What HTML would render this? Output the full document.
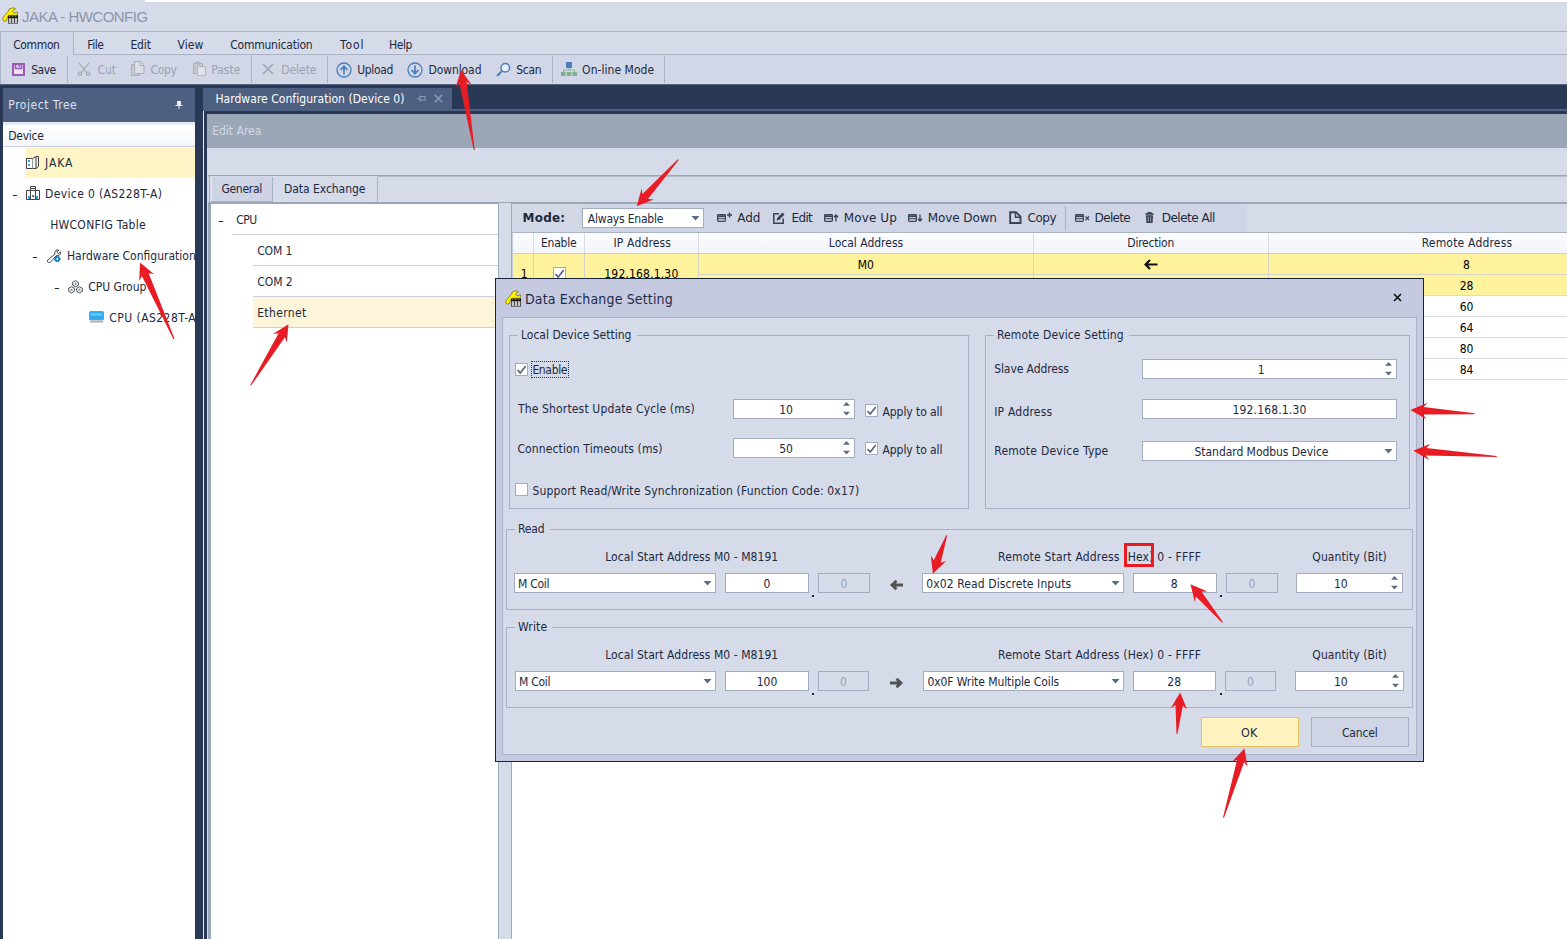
<!DOCTYPE html>
<html lang="en"><head><meta charset="utf-8"><title>JAKA - HWCONFIG</title>
<style>
*{box-sizing:border-box;margin:0;padding:0}
html,body{width:1567px;height:939px;overflow:hidden;background:#d6dbe9}
body{font-family:"DejaVu Sans Condensed","DejaVu Sans","Liberation Sans",sans-serif;font-stretch:condensed;font-size:12px;color:#1b293e;position:relative}
#app{position:absolute;left:0;top:0;width:1567px;height:939px;overflow:hidden;background:#d6dbe9}
#app div,#app span,#app svg{position:absolute}
.t{white-space:nowrap;line-height:16px;height:16px}
.c{width:200px;text-align:center}
.w{font-family:"DejaVu Sans","Liberation Sans",sans-serif;font-stretch:normal}
.dis{color:#9aa3b6}
.dash{transform:scaleX(1.45);transform-origin:0 0}
.in{background:#fff;border:1px solid #a3acc0}
.ind{background:#d7dcea;border:1px solid #a3acc0}
.gb{border:1px solid #a7b0c4}
.gl{background:#d6dbe9}
.hl{background:#c9cfdc}
</style></head>
<body><div id="app">
<div style="left:145px;top:0px;width:1422px;height:2px;background:#fff"></div>
<svg style="left:0px;top:6px" width="20" height="19" viewBox="0 0 20 19"><rect x="8" y="9.300" width="10" height="8.400" fill="#4f4f4f"/><rect x="8" y="9.300" width="10" height="2.600" fill="#111"/><path d="M9.800 10.300h.01M12.800 10.300h.01M15.800 10.300h.01" stroke="#d8cf2a" stroke-width="1.100" stroke-linecap="round"/><rect x="9" y="12.300" width="2" height="4.700" fill="#c6c6c6"/><rect x="12" y="12.300" width="2" height="4.700" fill="#c6c6c6"/><rect x="15" y="12.300" width="2" height="4.700" fill="#c6c6c6"/><path d="M2.700 13.500L3 11.500 8.500 5 9.500 2.800 12 2h2.500l1 1-2 1-.8 1.700L14 7l2-.8 1.500-.2v1.500l-1 1.800h-8l-1 1.700-1 3.500-2.500.8z" fill="#fff200" stroke="#6b6400" stroke-width=".7" stroke-linejoin="round"/></svg>
<span class="t" style="letter-spacing:-0.52px;left:22px;top:9px;font-family:'Liberation Sans',sans-serif;font-size:15px;color:#8c95aa">JAKA - HWCONFIG</span>
<div style="left:0px;top:31px;width:1567px;height:1px;background:#a9b3c6"></div>
<div style="left:0px;top:55px;width:1567px;height:29px;background:#d1d7e7"></div>
<div style="left:0px;top:32px;width:74px;height:23px;border-right:1px solid #a9b3c6;background:#d1d7e7"></div>
<div style="left:0px;top:32px;width:1px;height:52px;background:#a9b3c6"></div>
<div style="left:73px;top:54px;width:1494px;height:1px;background:#a9b3c6"></div>
<span class="t" style="letter-spacing:-0.37px;left:13.2px;top:37px;">Common</span>
<span class="t" style="letter-spacing:-0.49px;left:87.3px;top:37px;">File</span>
<span class="t" style="letter-spacing:-0.14px;left:130.4px;top:37px;">Edit</span>
<span class="t" style="letter-spacing:0.14px;left:177.4px;top:37px;">View</span>
<span class="t" style="letter-spacing:-0.22px;left:230.2px;top:37px;">Communication</span>
<span class="t" style="letter-spacing:0.94px;left:340px;top:37px;">Tool</span>
<span class="t" style="letter-spacing:-0.44px;left:389px;top:37px;">Help</span>
<div style="left:67px;top:56px;width:1px;height:27px;background:#a9b3c6"></div>
<div style="left:251px;top:56px;width:1px;height:27px;background:#a9b3c6"></div>
<div style="left:327px;top:56px;width:1px;height:27px;background:#a9b3c6"></div>
<div style="left:552px;top:56px;width:1px;height:27px;background:#a9b3c6"></div>
<div style="left:664px;top:56px;width:1px;height:27px;background:#a9b3c6"></div>
<svg style="left:12px;top:63px" width="13" height="13" viewBox="0 0 13 13"><path d="M1 1h11v11H1z" fill="#e9e3f2" stroke="#9b59b6" stroke-width="2"/><path d="M3.500 1.500v4h6v-4" fill="none" stroke="#9b59b6" stroke-width="1.600"/><rect x="6.500" y="1.500" width="1.600" height="2.500" fill="#9b59b6"/></svg>
<span class="t" style="letter-spacing:-0.54px;left:31.3px;top:62px;">Save</span>
<svg style="left:77px;top:62px" width="14" height="14" viewBox="0 0 14 14"><g fill="none" stroke="#a2a6ae" stroke-width="1.2"><path d="M2 1 L10 11 M12 1 L4 11"/><circle cx="3" cy="11.7" r="1.7"/><circle cx="11" cy="11.7" r="1.7"/></g></svg>
<span class="t dis" style="left:97.4px;top:62px;">Cut</span>
<svg style="left:131px;top:61px" width="14" height="15" viewBox="0 0 14 15"><path d="M.5 3.5h8v11h-8z" fill="#c9ccd4" stroke="#a9adb6"/><path d="M3.5.5h6l3.5 3.5v8.500h-9.500z" fill="#dcdfe6" stroke="#a9adb6"/><path d="M9 .5v4h4" fill="none" stroke="#a9adb6"/></svg>
<span class="t dis" style="letter-spacing:-0.30px;left:150.5px;top:62px;">Copy</span>
<svg style="left:193px;top:61px" width="14" height="15" viewBox="0 0 14 15"><path d="M.5 2.5h9v10h-9z" fill="#c4c7cf" stroke="#a9adb6"/><rect x="3" y=".5" width="4" height="3" fill="#b1b5bd"/><path d="M4.500 5.500h8v9h-8z" fill="#e1e3e9" stroke="#b3b7bf"/></svg>
<span class="t dis" style="left:211.2px;top:62px;">Paste</span>
<svg style="left:262px;top:63px" width="12" height="12" viewBox="0 0 12 12"><path d="M1 1l10 10M11 1L1 11" stroke="#a2a6ae" stroke-width="1.7" fill="none"/></svg>
<span class="t dis" style="letter-spacing:-0.04px;left:281.2px;top:62px;">Delete</span>
<svg style="left:336px;top:62px" width="16" height="16" viewBox="0 0 16 16"><circle cx="8" cy="8" r="7" fill="none" stroke="#4a7fbd" stroke-width="1.3"/><path d="M8 12.500V4.500M4.500 8L8 4.300 11.500 8" fill="none" stroke="#4a7fbd" stroke-width="1.700"/></svg>
<span class="t" style="letter-spacing:-0.37px;left:357.3px;top:62px;">Upload</span>
<svg style="left:407px;top:62px" width="16" height="16" viewBox="0 0 16 16"><circle cx="8" cy="8" r="7" fill="none" stroke="#4a7fbd" stroke-width="1.3"/><path d="M8 3.500v8M4.500 8L8 11.700 11.500 8" fill="none" stroke="#4a7fbd" stroke-width="1.700"/></svg>
<span class="t" style="letter-spacing:-0.08px;left:428.4px;top:62px;">Download</span>
<svg style="left:496px;top:62px" width="15" height="15" viewBox="0 0 15 15"><circle cx="9.300" cy="5.700" r="4.300" fill="#e9eef7" stroke="#4a7fbd" stroke-width="1.500"/><path d="M6 9L1 14" stroke="#4a7fbd" stroke-width="2"/></svg>
<span class="t" style="letter-spacing:-0.35px;left:516.3px;top:62px;">Scan</span>
<svg style="left:561px;top:62px" width="16" height="14" viewBox="0 0 16 14"><rect x="5" y="0" width="6" height="6" fill="#4a7fbd"/><path d="M8 6v2M2.500 10V8h11v2" fill="none" stroke="#8fb59a" stroke-width="1"/><rect x="0" y="10" width="4.500" height="4" fill="#7fae8d"/><rect x="5.700" y="10" width="4.500" height="4" fill="#7fae8d"/><rect x="11.400" y="10" width="4.500" height="4" fill="#7fae8d"/></svg>
<span class="t" style="letter-spacing:0.04px;left:582.1px;top:62px;">On-line Mode</span>
<div style="left:0px;top:84px;width:1567px;height:30px;background:#293955"></div>
<div style="left:0px;top:84px;width:1567px;height:1px;background:#56627c"></div>
<div style="left:0px;top:114px;width:207px;height:825px;background:#293955"></div>
<div style="left:3px;top:88px;width:192px;height:34px;background:#4d6082"></div>
<span class="t" style="letter-spacing:0.53px;left:8.3px;top:97px;color:#dde3f0">Project Tree</span>
<svg style="left:175px;top:101px" width="8" height="8" viewBox="0 0 8 8"><path d="M2 0h4v4h1.500v1H4.500v3h-1V5H.5V4H2z" fill="#e9edf6"/></svg>
<div style="left:3px;top:122px;width:192px;height:817px;background:#fff"></div>
<div style="left:3px;top:122px;width:192px;height:3px;background:#e7ebf5"></div>
<div style="left:3px;top:125px;width:192px;height:21px;background:linear-gradient(#fff,#f4f6fb)"></div>
<div style="left:3px;top:146px;width:192px;height:1px;background:#c9cfdc"></div>
<span class="t" style="letter-spacing:-0.29px;left:8.3px;top:128px;">Device</span>
<div style="left:25px;top:147px;width:170px;height:31px;background:#fff5c6"></div>
<span class="t" style="letter-spacing:0.96px;left:45px;top:155px;">JAKA</span>
<svg style="left:26px;top:156px" width="14" height="14" viewBox="0 0 14 14"><path d="M.5 2.500h6v10h-6z" fill="#fff" stroke="#444"/><path d="M6.500 2.500L10 .5h2.500v10L10 12.500H6.500" fill="#f2f2f2" stroke="#444"/><path d="M10 .5v12" stroke="#444"/><rect x="2" y="4" width="2" height="2" fill="#2f9fe0"/><rect x="2" y="8" width="2" height="2" fill="#2f9fe0"/></svg>
<span class="t dash" style="left:11.8px;top:187px;">-</span>
<svg style="left:26px;top:186px" width="14" height="14" viewBox="0 0 14 14"><path d="M.5 4.500h13v9H.5z" fill="#fff" stroke="#444"/><path d="M4.500 .5h5v13h-5z" fill="#fff" stroke="#444"/><path d="M4.500 2.500h5M4.500 4.500h5" stroke="#444"/><rect x="2" y="10" width="2" height="3" fill="#2f9fe0"/><rect x="10" y="10" width="2" height="3" fill="#2f9fe0"/><rect x="6.300" y="9" width="1.500" height="2" fill="#444"/></svg>
<span class="t" style="letter-spacing:0.37px;left:45px;top:186px;">Device 0 (AS228T-A)</span>
<span class="t" style="letter-spacing:0.28px;left:50.2px;top:217px;">HWCONFIG Table</span>
<span class="t dash" style="left:32.4px;top:249px;">-</span>
<svg style="left:47px;top:248px" width="15" height="15" viewBox="0 0 15 15"><path d="M1.500 11.500a1.800 1.800 0 1 0 2.500 2L9.500 7.500a3 3 0 0 0 4-3.700L11.500 5.800 9.700 4 11.700 2a3 3 0 0 0-3.700 4z" fill="#fff" stroke="#444" stroke-width="1"/><circle cx="10.300" cy="11" r="2.600" fill="#1f8fd6" stroke="#0d5f9a" stroke-width="1.200" stroke-dasharray="1.300 .8"/><circle cx="10.300" cy="11" r=".9" fill="#fff"/></svg>
<div style="left:0;top:240px;width:195px;height:31px;overflow:hidden">
<span class="t" style="left:67px;top:8px;">Hardware Configuration</span>
</div>
<span class="t dash" style="left:53.8px;top:280px;">-</span>
<svg style="left:68px;top:280px" width="15" height="14" viewBox="0 0 15 14"><g fill="#fff" stroke="#444"><path d="M7.500 .7l2.800 1.600v3L7.500 6.900 4.700 5.300v-3z"/><path d="M3.500 6.700l2.800 1.600v3L3.500 12.900.7 11.300v-3z"/><path d="M11.500 6.700l2.800 1.600v3l-2.800 1.600-2.800-1.600v-3z"/></g><circle cx="7.500" cy="3.800" r="1.100" fill="#2f9fe0"/><circle cx="3.500" cy="9.800" r="1.100" fill="#2f9fe0"/><circle cx="11.500" cy="9.800" r="1.100" fill="#2f9fe0"/></svg>
<span class="t" style="left:88.2px;top:279px;">CPU Group</span>
<svg style="left:88.5px;top:311px" width="15" height="12" viewBox="0 0 15 12"><rect x=".5" y=".5" width="14" height="8.500" rx="1" fill="#2eaaf0" stroke="#8d949e"/><rect x="2" y="2" width="11" height="3" fill="#7fd0ff" opacity=".6"/><path d="M1 10.200h13v1.300H1z" fill="#9aa0a8"/></svg>
<div style="left:0;top:302px;width:195px;height:31px;overflow:hidden">
<span class="t" style="letter-spacing:0.45px;left:109.3px;top:8px;">CPU (AS228T-A)</span>
</div>
<div style="left:203px;top:88px;width:249px;height:22px;background:#4d6082"></div>
<div style="left:203px;top:109px;width:1364px;height:2px;background:#4d6082"></div>
<div style="left:203px;top:111px;width:1px;height:828px;background:#e4e8f2"></div>
<span class="t" style="letter-spacing:0.04px;left:215.4px;top:91px;color:#fff">Hardware Configuration (Device 0)</span>
<svg style="left:417px;top:94px" width="9" height="9" viewBox="0 0 9 9"><path d="M0 4.500h3M3 1.500v6M3 2.500h5v3.500H3" fill="none" stroke="#8b98b5" stroke-width="1.100"/></svg>
<svg style="left:434px;top:94px" width="9" height="9" viewBox="0 0 9 9"><path d="M.7.7l7.600 7.600M8.300.7L.7 8.300" stroke="#8b98b5" stroke-width="1.500" fill="none"/></svg>
<div style="left:207px;top:114px;width:1360px;height:34px;background:#9ba7b7"></div>
<div style="left:208px;top:203px;width:3px;height:736px;background:#9ba7b7"></div>
<span class="t" style="left:212.2px;top:123px;color:#d3d9e6">Edit Area</span>
<div style="left:208px;top:175px;width:1359px;height:1px;background:#9ba7b7"></div>
<div style="left:208px;top:176px;width:1359px;height:1px;background:#b3bccc"></div>
<div style="left:209px;top:176px;width:169px;height:27px;border-left:1px solid #a9b3c6;background:#d6dbe9"></div>
<div style="left:211px;top:177px;width:62px;height:26px;background:#ced4e4;border-right:1px solid #a9b3c6;border-left:1px solid #e3e7f1"></div>
<div style="left:377px;top:177px;width:1px;height:26px;background:#a9b3c6"></div>
<div style="left:211px;top:201px;width:61px;height:1px;background:#a9b3c6"></div>
<span class="t" style="letter-spacing:-0.29px;left:221.4px;top:181px;">General</span>
<span class="t" style="letter-spacing:-0.04px;left:284px;top:181px;">Data Exchange</span>
<div style="left:208px;top:202px;width:1359px;height:2px;background:#9ba7b7"></div>
<div style="left:211px;top:204px;width:287px;height:735px;background:#fff"></div>
<div style="left:253px;top:297px;width:245px;height:30px;background:#fdf5d9"></div>
<div style="left:232px;top:234px;width:266px;height:1px;background:#c9cfdc"></div>
<div style="left:253px;top:265px;width:245px;height:1px;background:#c9cfdc"></div>
<div style="left:253px;top:296px;width:245px;height:1px;background:#c9cfdc"></div>
<div style="left:253px;top:327px;width:245px;height:1px;background:#c9cfdc"></div>
<span class="t dash" style="left:217.8px;top:213px;">-</span>
<span class="t" style="letter-spacing:-0.48px;left:236.2px;top:212px;">CPU</span>
<span class="t" style="letter-spacing:-0.11px;left:257.2px;top:243px;">COM 1</span>
<span class="t" style="letter-spacing:-0.04px;left:257.2px;top:274px;">COM 2</span>
<span class="t" style="letter-spacing:0.36px;left:257.2px;top:305px;">Ethernet</span>
<div style="left:498px;top:203px;width:14px;height:736px;background:#d6dbe9;border-left:1px solid #9fabbd;border-right:1px solid #9fabbd"></div>
<div style="left:512px;top:204px;width:1055px;height:735px;background:#fff"></div>
<div style="left:512px;top:204px;width:1055px;height:29px;background:#d6dbe9"></div>
<div style="left:513px;top:205px;width:734px;height:27px;background:#cfd5e5"></div>
<div style="left:513px;top:205px;width:66px;height:27px;background:#d3d8e7"></div>
<div style="left:512px;top:232px;width:1055px;height:1px;background:#a9b3c6"></div>
<span class="t w" style="letter-spacing:0.20px;left:522.6px;top:210px;font-weight:bold">Mode:</span>
<div class="in" style="left:582px;top:208px;width:122px;height:20px;"></div>
<span class="t" style="letter-spacing:-0.20px;left:587.8px;top:211px;">Always Enable</span>
<svg style="left:691px;top:216px" width="9" height="5" viewBox="0 0 9 5"><path d="M.5 0h8L4.500 4.500z" fill="#5d6b85"/></svg>
<svg style="left:717px;top:211px" width="16" height="12" viewBox="0 0 16 12"><g fill="none" stroke="#3b4356" stroke-width="1.200" transform="translate(0 3)"><rect x=".6" y=".6" width="7.800" height="6.800" rx=".8"/><path d="M.6 2.200h7.800" stroke-width="1.800"/><path d="M.6 4.700h7.800" stroke-width="1"/></g><path d="M12.500 1.500v5M10 4h5" fill="none" stroke="#3b4356" stroke-width="1.500"/></svg>
<span class="t w" style="letter-spacing:-0.12px;left:737.3px;top:210px;">Add</span>
<svg style="left:773px;top:212px" width="12" height="12" viewBox="0 0 12 12"><path d="M6 1.800H.8v9.400h9.400V6.500" fill="none" stroke="#3b4356" stroke-width="1.500"/><path d="M3.600 8.600l.6-2.700L9.500.6l2 2L6.200 8z" fill="#3b4356"/></svg>
<span class="t w" style="letter-spacing:-0.70px;left:791.6px;top:210px;">Edit</span>
<svg style="left:824px;top:214px" width="15" height="8" viewBox="0 0 15 8"><g fill="none" stroke="#3b4356" stroke-width="1.200"><rect x=".6" y=".6" width="7.800" height="6.800" rx=".8"/><path d="M.6 2.200h7.800" stroke-width="1.800"/><path d="M.6 4.700h7.800" stroke-width="1"/></g><path d="M12 7.500V1M10 3.200l2-2.200 2 2.200" fill="none" stroke="#3b4356" stroke-width="1.300"/></svg>
<span class="t w" style="letter-spacing:0.10px;left:843.8px;top:210px;">Move Up</span>
<svg style="left:908px;top:214px" width="15" height="8" viewBox="0 0 15 8"><g fill="none" stroke="#3b4356" stroke-width="1.200"><rect x=".6" y=".6" width="7.800" height="6.800" rx=".8"/><path d="M.6 2.200h7.800" stroke-width="1.800"/><path d="M.6 4.700h7.800" stroke-width="1"/></g><path d="M12 .5V7M10 4.800l2 2.200 2-2.200" fill="none" stroke="#3b4356" stroke-width="1.300"/></svg>
<span class="t w" style="letter-spacing:-0.09px;left:927.7px;top:210px;">Move Down</span>
<svg style="left:1009px;top:211px" width="13" height="13" viewBox="0 0 13 13"><path d="M1.200 1.200h5.800L11.500 5.700V12H1.200z" fill="none" stroke="#3b4356" stroke-width="1.900"/><path d="M6.500 1.200v5h5" fill="none" stroke="#3b4356" stroke-width="1.400"/></svg>
<span class="t w" style="letter-spacing:-0.38px;left:1027.4px;top:210px;">Copy</span>
<div style="left:1065px;top:206px;width:1px;height:24px;background:#a9b3c6"></div>
<svg style="left:1075px;top:214px" width="15" height="8" viewBox="0 0 15 8"><g fill="none" stroke="#3b4356" stroke-width="1.200"><rect x=".6" y=".6" width="7.800" height="6.800" rx=".8"/><path d="M.6 2.200h7.800" stroke-width="1.800"/><path d="M.6 4.700h7.800" stroke-width="1"/></g><path d="M10.500 2.500l3.500 3.500M14 2.500L10.500 6" fill="none" stroke="#3b4356" stroke-width="1.300"/></svg>
<span class="t w" style="letter-spacing:-0.67px;left:1094.6px;top:210px;">Delete</span>
<svg style="left:1145px;top:212px" width="9" height="11" viewBox="0 0 9 11"><path d="M.3 2h8.400M3 1.700V.6h3v1.100" stroke="#3b4356" stroke-width="1.300" fill="none"/><path d="M1 3.200h7l-.4 7.800H1.400z" fill="#3b4356"/><path d="M3.300 4.500v5M5.700 4.500v5" stroke="#cfd5e5" stroke-width=".6"/></svg>
<span class="t w" style="letter-spacing:-0.49px;left:1161.7px;top:210px;">Delete All</span>
<div style="left:513px;top:233px;width:1054px;height:20px;background:linear-gradient(#fbfcfe,#f3f5fa)"></div>
<div style="left:512px;top:253px;width:1055px;height:1px;background:#c9cfdc"></div>
<div style="left:512px;top:233px;width:1px;height:147px;background:#c9cfdc"></div>
<div style="left:533px;top:233px;width:1px;height:20px;background:#d5dae5"></div>
<div style="left:584px;top:233px;width:1px;height:20px;background:#d5dae5"></div>
<div style="left:698px;top:233px;width:1px;height:20px;background:#d5dae5"></div>
<div style="left:1033px;top:233px;width:1px;height:20px;background:#d5dae5"></div>
<div style="left:1268px;top:233px;width:1px;height:20px;background:#d5dae5"></div>
<span class="t c" style="letter-spacing:-0.20px;left:458.70000000000005px;top:235px;">Enable</span>
<span class="t c" style="letter-spacing:0.15px;left:542.3px;top:235px;">IP Address</span>
<span class="t c" style="left:766px;top:235px;">Local Address</span>
<span class="t c" style="letter-spacing:-0.22px;left:1050.7px;top:235px;">Direction</span>
<span class="t c" style="letter-spacing:0.19px;left:1367px;top:235px;">Remote Address</span>
<div style="left:513px;top:254px;width:1054px;height:42px;background:#fff29d"></div>
<div style="left:533px;top:254px;width:1px;height:42px;background:#d6d3c8"></div>
<div style="left:584px;top:254px;width:1px;height:42px;background:#d6d3c8"></div>
<div style="left:698px;top:254px;width:1px;height:42px;background:#d6d3c8"></div>
<div style="left:1033px;top:254px;width:1px;height:42px;background:#d6d3c8"></div>
<div style="left:1268px;top:254px;width:1px;height:42px;background:#d6d3c8"></div>
<div style="left:698px;top:274px;width:869px;height:1px;background:#d6d3c8"></div>
<div style="left:512px;top:295px;width:1055px;height:1px;background:#d5dae5"></div>
<div style="left:512px;top:316px;width:1055px;height:1px;background:#d5dae5"></div>
<div style="left:512px;top:337px;width:1055px;height:1px;background:#d5dae5"></div>
<div style="left:512px;top:358px;width:1055px;height:1px;background:#d5dae5"></div>
<div style="left:512px;top:379px;width:1055px;height:1px;background:#d5dae5"></div>
<span class="t" style="left:520.7px;top:266px;color:#000">1</span>
<div style="left:553px;top:267px;width:13px;height:13px;background:#fff;border:1px solid #a3acc0"></div>
<svg style="left:555px;top:269px" width="9" height="9" viewBox="0 0 9 9"><path d="M.5 5L3.200 8 8.700.9" fill="none" stroke="#56647f" stroke-width="1.700"/></svg>
<span class="t c" style="letter-spacing:0.17px;left:541.4px;top:266px;color:#000">192.168.1.30</span>
<span class="t c" style="left:765.8px;top:257px;color:#000">M0</span>
<svg style="left:1144px;top:259px" width="14" height="11" viewBox="0 0 14 11"><path d="M13.500 5.500H2.500M6 1L1.500 5.500 6 10" fill="none" stroke="#111" stroke-width="2.200"/></svg>
<span class="t c" style="left:1366.5px;top:257px;color:#000">8</span>
<span class="t c" style="left:1366.5px;top:278px;color:#000">28</span>
<span class="t c" style="left:1366.5px;top:299px;color:#000">60</span>
<span class="t c" style="left:1366.5px;top:320px;color:#000">64</span>
<span class="t c" style="left:1366.5px;top:341px;color:#000">80</span>
<span class="t c" style="left:1366.5px;top:362px;color:#000">84</span>
<div style="left:495px;top:278px;width:929px;height:484px;background:#c5cae0;border:1px solid #17233a"></div>
<div style="left:502px;top:317px;width:915px;height:438px;background:#d6dbe9;border:1px solid #a9b1c6"></div>
<svg style="left:503px;top:288.500px" width="20" height="19" viewBox="0 0 20 19"><rect x="8" y="9.300" width="10" height="8.400" fill="#4f4f4f"/><rect x="8" y="9.300" width="10" height="2.600" fill="#111"/><path d="M9.800 10.300h.01M12.800 10.300h.01M15.800 10.300h.01" stroke="#d8cf2a" stroke-width="1.100" stroke-linecap="round"/><rect x="9" y="12.300" width="2" height="4.700" fill="#c6c6c6"/><rect x="12" y="12.300" width="2" height="4.700" fill="#c6c6c6"/><rect x="15" y="12.300" width="2" height="4.700" fill="#c6c6c6"/><path d="M2.700 13.500L3 11.500 8.500 5 9.500 2.800 12 2h2.500l1 1-2 1-.8 1.700L14 7l2-.8 1.500-.2v1.500l-1 1.800h-8l-1 1.700-1 3.500-2.500.8z" fill="#fff200" stroke="#6b6400" stroke-width=".7" stroke-linejoin="round"/></svg>
<span class="t" style="letter-spacing:0.15px;left:525px;top:291px;font-size:14px;color:#1e2b4d">Data Exchange Setting</span>
<svg style="left:1393px;top:293px" width="9" height="9" viewBox="0 0 9 9"><path d="M1 1l7 7M8 1L1 8" stroke="#111" stroke-width="1.600" fill="none"/></svg>
<div class="gb" style="left:509px;top:335px;width:460px;height:174px;"></div>
<div class="gl" style="left:518px;top:335px;width:118.7px;height:1px;"></div>
<span class="t" style="left:521px;top:327px;">Local Device Setting</span>
<div class="gb" style="left:985px;top:335px;width:425px;height:174px;"></div>
<div class="gl" style="left:994px;top:335px;width:134.6px;height:1px;"></div>
<span class="t" style="letter-spacing:0.13px;left:997px;top:327px;">Remote Device Setting</span>
<div class="gb" style="left:506px;top:529px;width:907px;height:81px;"></div>
<div class="gl" style="left:515px;top:529px;width:34.5px;height:1px;"></div>
<span class="t" style="letter-spacing:-0.19px;left:518px;top:521px;">Read</span>
<div class="gb" style="left:506px;top:627px;width:907px;height:81px;"></div>
<div class="gl" style="left:515px;top:627px;width:37.1px;height:1px;"></div>
<span class="t" style="letter-spacing:0.16px;left:518px;top:619px;">Write</span>
<div style="left:515px;top:363px;width:13px;height:13px;background:#fff;border:1px solid #a3acc0"></div>
<svg style="left:517px;top:365px" width="9" height="9" viewBox="0 0 9 9"><path d="M.5 5L3.200 8 8.700.9" fill="none" stroke="#56647f" stroke-width="1.700"/></svg>
<span class="t" style="letter-spacing:-0.34px;left:532.4px;top:362px;">Enable</span>
<div style="left:531px;top:361px;width:38px;height:17px;border:1px dotted #333"></div>
<span class="t" style="letter-spacing:0.15px;left:518px;top:401px;">The Shortest Update Cycle (ms)</span>
<div class="in" style="left:733px;top:399px;width:122px;height:20px;"></div>
<span class="t c" style="left:686px;top:402px;">10</span>
<svg style="left:843px;top:401px" width="7" height="16" viewBox="0 0 7 16"><path d="M0 4.800h7L3.500 1zM0 10.800h7L3.500 14.600z" fill="#5d6b85"/></svg>
<div style="left:865px;top:404px;width:13px;height:13px;background:#fff;border:1px solid #a3acc0"></div>
<svg style="left:867px;top:406px" width="9" height="9" viewBox="0 0 9 9"><path d="M.5 5L3.200 8 8.700.9" fill="none" stroke="#56647f" stroke-width="1.700"/></svg>
<span class="t" style="letter-spacing:-0.07px;left:882.5px;top:404px;">Apply to all</span>
<span class="t" style="letter-spacing:0.13px;left:517.4px;top:441px;">Connection Timeouts (ms)</span>
<div class="in" style="left:733px;top:438px;width:122px;height:20px;"></div>
<span class="t c" style="left:686px;top:441px;">50</span>
<svg style="left:843px;top:440px" width="7" height="16" viewBox="0 0 7 16"><path d="M0 4.800h7L3.500 1zM0 10.800h7L3.500 14.600z" fill="#5d6b85"/></svg>
<div style="left:865px;top:442px;width:13px;height:13px;background:#fff;border:1px solid #a3acc0"></div>
<svg style="left:867px;top:444px" width="9" height="9" viewBox="0 0 9 9"><path d="M.5 5L3.200 8 8.700.9" fill="none" stroke="#56647f" stroke-width="1.700"/></svg>
<span class="t" style="letter-spacing:-0.07px;left:882.5px;top:442px;">Apply to all</span>
<div style="left:515px;top:483px;width:13px;height:13px;background:#fff;border:1px solid #a3acc0"></div>
<span class="t" style="letter-spacing:0.16px;left:532.4px;top:483px;">Support Read/Write Synchronization (Function Code: 0x17)</span>
<span class="t" style="letter-spacing:-0.09px;left:994.2px;top:361px;">Slave Address</span>
<div class="in" style="left:1142px;top:359px;width:255px;height:20px;"></div>
<span class="t c" style="left:1161.3px;top:362px;">1</span>
<svg style="left:1385px;top:361px" width="7" height="16" viewBox="0 0 7 16"><path d="M0 4.800h7L3.500 1zM0 10.800h7L3.500 14.600z" fill="#5d6b85"/></svg>
<span class="t" style="letter-spacing:0.21px;left:994.2px;top:404px;">IP Address</span>
<div class="in" style="left:1142px;top:399px;width:255px;height:20px;"></div>
<span class="t c" style="letter-spacing:0.16px;left:1169.5px;top:402px;">192.168.1.30</span>
<span class="t" style="letter-spacing:0.24px;left:994.2px;top:443px;">Remote Device Type</span>
<div class="in" style="left:1142px;top:441px;width:255px;height:20px;"></div>
<span class="t c" style="letter-spacing:-0.05px;left:1161.5px;top:444px;">Standard Modbus Device</span>
<svg style="left:1384px;top:449px" width="9" height="5" viewBox="0 0 9 5"><path d="M.5 0h8L4.500 4.500z" fill="#5d6b85"/></svg>
<span class="t" style="letter-spacing:0.06px;left:605.2px;top:549px;">Local Start Address M0 - M8191</span>
<span class="t" style="letter-spacing:0.19px;left:998.1px;top:549px;">Remote Start Address (Hex) 0 - FFFF</span>
<span class="t" style="letter-spacing:0.10px;left:1312.3px;top:549px;">Quantity (Bit)</span>
<div class="in" style="left:514px;top:573px;width:202px;height:20px;"></div>
<span class="t" style="letter-spacing:-0.26px;left:518px;top:576px;">M Coil</span>
<svg style="left:703px;top:581px" width="9" height="5" viewBox="0 0 9 5"><path d="M.5 0h8L4.500 4.500z" fill="#5d6b85"/></svg>
<div class="in" style="left:725px;top:573px;width:84px;height:20px;"></div>
<span class="t c" style="left:667px;top:576px;">0</span>
<div style="left:812px;top:595px;width:2px;height:2px;background:#1b293e"></div>
<div class="ind" style="left:818px;top:573px;width:52px;height:20px;"></div>
<span class="t c dis" style="left:744.0px;top:576px;">0</span>
<div class="in" style="left:922px;top:573px;width:202px;height:20px;"></div>
<span class="t" style="letter-spacing:0.10px;left:926.3px;top:576px;">0x02 Read Discrete Inputs</span>
<svg style="left:1111px;top:581px" width="9" height="5" viewBox="0 0 9 5"><path d="M.5 0h8L4.500 4.500z" fill="#5d6b85"/></svg>
<div class="in" style="left:1133px;top:573px;width:84px;height:20px;"></div>
<span class="t c" style="left:1074.2px;top:576px;">8</span>
<div style="left:1220px;top:595px;width:2px;height:2px;background:#1b293e"></div>
<div class="ind" style="left:1226px;top:573px;width:52px;height:20px;"></div>
<span class="t c dis" style="left:1152.0px;top:576px;">0</span>
<div class="in" style="left:1296px;top:573px;width:107px;height:20px;"></div>
<span class="t c" style="left:1240.8px;top:576px;">10</span>
<svg style="left:1391px;top:575px" width="7" height="16" viewBox="0 0 7 16"><path d="M0 4.800h7L3.500 1zM0 10.800h7L3.500 14.600z" fill="#5d6b85"/></svg>
<span class="t" style="letter-spacing:0.06px;left:605.2px;top:647px;">Local Start Address M0 - M8191</span>
<span class="t" style="letter-spacing:0.19px;left:998.1px;top:647px;">Remote Start Address (Hex) 0 - FFFF</span>
<span class="t" style="letter-spacing:0.10px;left:1312.3px;top:647px;">Quantity (Bit)</span>
<div class="in" style="left:515px;top:671px;width:201px;height:20px;"></div>
<span class="t" style="letter-spacing:-0.26px;left:519px;top:674px;">M Coil</span>
<svg style="left:703px;top:679px" width="9" height="5" viewBox="0 0 9 5"><path d="M.5 0h8L4.500 4.500z" fill="#5d6b85"/></svg>
<div class="in" style="left:725px;top:671px;width:84px;height:20px;"></div>
<span class="t c" style="left:667px;top:674px;">100</span>
<div style="left:812px;top:693px;width:2px;height:2px;background:#1b293e"></div>
<div class="ind" style="left:818px;top:671px;width:51px;height:20px;"></div>
<span class="t c dis" style="left:743.5px;top:674px;">0</span>
<div class="in" style="left:923px;top:671px;width:201px;height:20px;"></div>
<span class="t" style="letter-spacing:-0.08px;left:927.4px;top:674px;">0x0F Write Multiple Coils</span>
<svg style="left:1111px;top:679px" width="9" height="5" viewBox="0 0 9 5"><path d="M.5 0h8L4.500 4.500z" fill="#5d6b85"/></svg>
<div class="in" style="left:1133px;top:671px;width:83px;height:20px;"></div>
<span class="t c" style="left:1074.2px;top:674px;">28</span>
<div style="left:1220px;top:693px;width:2px;height:2px;background:#1b293e"></div>
<div class="ind" style="left:1225px;top:671px;width:51px;height:20px;"></div>
<span class="t c dis" style="left:1150.5px;top:674px;">0</span>
<div class="in" style="left:1295px;top:671px;width:109px;height:20px;"></div>
<span class="t c" style="left:1240.8px;top:674px;">10</span>
<svg style="left:1392px;top:673px" width="7" height="16" viewBox="0 0 7 16"><path d="M0 4.800h7L3.500 1zM0 10.800h7L3.500 14.600z" fill="#5d6b85"/></svg>
<svg style="left:889px;top:579px" width="15" height="12" viewBox="0 0 15 12"><path d="M14 6H3.500M7.500 1.800L3 6l4.500 4.200" fill="none" stroke="#525252" stroke-width="2.800"/></svg>
<svg style="left:889px;top:677px" width="15" height="12" viewBox="0 0 15 12"><path d="M1 6H11.500M7.500 1.800L12 6 7.500 10.200" fill="none" stroke="#525252" stroke-width="2.800"/></svg>
<div style="left:1124px;top:543px;width:30px;height:24px;border:3px solid #e81c24"></div>
<div style="left:1201px;top:717px;width:98px;height:30px;background:#fff3c0;border:1px solid #e5c365"></div>
<span class="t c" style="left:1149.2px;top:725px;font-size:12.5px">OK</span>
<div style="left:1311px;top:717px;width:98px;height:30px;background:#cfd5e5;border:1px solid #a9b1c6"></div>
<span class="t c" style="letter-spacing:-0.16px;left:1259.7px;top:725px;">Cancel</span>
<svg style="left:0;top:0" width="1567" height="939" viewBox="0 0 1567 939"><g fill="#e81c24">
<polygon points="461.0,70.0 455.6,87.6 459.4,83.3 473.7,150.1 474.7,149.9 466.7,82.1 471.8,84.9"/>
<polygon points="636.7,206.2 653.8,199.4 648.0,199.1 678.7,159.9 677.9,159.3 642.5,194.1 641.6,188.4"/>
<polygon points="140.0,262.6 139.2,281.0 141.9,275.9 173.5,339.2 174.5,338.8 148.6,272.9 154.2,274.3"/>
<polygon points="288.5,324.3 272.8,334.0 278.6,333.3 250.3,385.0 251.1,385.6 284.9,337.2 286.8,342.6"/>
<polygon points="1410.5,410.0 1426.5,419.2 1423.1,414.5 1474.5,414.3 1474.5,413.3 1423.6,407.1 1427.5,402.8"/>
<polygon points="1413.3,450.8 1429.2,460.1 1425.9,455.4 1496.7,457.0 1496.7,456.0 1426.4,448.0 1430.3,443.7"/>
<polygon points="932.9,573.7 946.2,561.0 940.7,562.8 947.2,535.6 946.2,535.2 933.8,560.3 930.8,555.4"/>
<polygon points="1190.5,584.2 1194.8,602.1 1195.9,596.4 1222.1,622.7 1222.9,622.1 1201.6,591.7 1207.4,591.6"/>
<polygon points="1180.2,692.5 1170.7,708.3 1175.5,705.0 1176.5,733.7 1177.5,733.7 1182.9,705.6 1187.1,709.6"/>
<polygon points="1244.4,748.6 1231.8,762.0 1237.1,759.8 1223.0,817.5 1224.0,817.7 1244.2,762.0 1247.5,766.8"/>
</g></svg>
</div></body></html>
